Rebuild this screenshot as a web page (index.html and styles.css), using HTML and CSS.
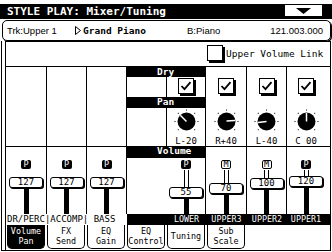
FILE: index.html
```html
<!DOCTYPE html>
<html lang="en">
<head>
    <meta charset="UTF-8">
    <title>Style Play - Mixer/Tuning</title>
    <link rel="stylesheet" href="styles.css">
</head>
<body>
<div class="screen">
    <div class="titlebar">
        <span class="title">STYLE PLAY: Mixer/Tuning</span>
        <span class="menu-btn">
            <svg width="15" height="6" viewBox="0 0 15 6"><polygon points="0,0 15,0 7.5,6" fill="#000"/></svg>
        </span>
    </div>

    <div class="trackbar">
        <span class="trk">Trk:Upper 1</span>
        <svg class="play" width="6" height="9" viewBox="0 0 6 9"><polygon points="0.5,0.5 5.5,4.5 0.5,8.5" fill="none" stroke="#000"/></svg>
        <span class="sound">Grand Piano</span>
        <span class="bank">B:Piano</span>
        <span class="prog">121.003.000</span>
    </div>

    <div class="frame">
        <div class="inner">
            <div class="link-row">
                <span class="check"></span>
                <span class="link-label">Upper Volume Link</span>
            </div>

            <div class="mixer">
                <!-- left tracks: no dry/pan -->
                <div class="col1 top line"></div>
                <div class="col2 top line"></div>
                <div class="col3 top line"></div>

                <!-- section headers -->
                <div class="head row1">Dry</div>
                <div class="head row3">Pan</div>
                <div class="head row5">Volume</div>
                <div class="col4 row2 line"></div>
                <div class="col4 row4 line"></div>
                <div class="col4 row6"></div>

                <!-- row 1 / 3 blanks for upper columns -->
                <div class="col6 row1 line"></div>
                <div class="col7 row1 line"></div>
                <div class="col8 row1"></div>
                <div class="col6 row3 line"></div>
                <div class="col7 row3 line"></div>
                <div class="col8 row3"></div>

                <!-- dry checkboxes -->
                <div class="col5 row2 line box-cell"><span class="check"><svg width="14" height="14" viewBox="0 0 14 14"><path d="M2.5 7 L5.5 10.2 L11.5 3.2" fill="none" stroke="#000" stroke-width="1.8"/></svg></span></div>
                <div class="col6 row2 line box-cell"><span class="check"><svg width="14" height="14" viewBox="0 0 14 14"><path d="M2.5 7 L5.5 10.2 L11.5 3.2" fill="none" stroke="#000" stroke-width="1.8"/></svg></span></div>
                <div class="col7 row2 line box-cell"><span class="check"><svg width="14" height="14" viewBox="0 0 14 14"><path d="M2.5 7 L5.5 10.2 L11.5 3.2" fill="none" stroke="#000" stroke-width="1.8"/></svg></span></div>
                <div class="col8 row2 box-cell last"><span class="check"><svg width="14" height="14" viewBox="0 0 14 14"><path d="M2.5 7 L5.5 10.2 L11.5 3.2" fill="none" stroke="#000" stroke-width="1.8"/></svg></span></div>

                <!-- pan knobs -->
                <div class="col5 row4 line knob-cell">
                    <svg width="25" height="25" viewBox="0 0 25 25">
                        <g fill="#000"><rect x="12" y="0.5" width="1" height="1"/><rect x="20.2" y="3.8" width="1" height="1"/><rect x="23.5" y="12" width="1" height="1"/><rect x="20.2" y="20.2" width="1" height="1"/><rect x="3.8" y="3.8" width="1" height="1"/><rect x="0.5" y="12" width="1" height="1"/><rect x="3.8" y="20.2" width="1" height="1"/></g>
                        <circle cx="12.5" cy="12.5" r="9" fill="#000"/>
                        <line x1="12.5" y1="12.5" x2="6.3" y2="6.3" stroke="#fff" stroke-width="1.5"/>
                    </svg>
                    <span class="pan">L-20</span>
                </div>
                <div class="col6 row4 line knob-cell">
                    <svg width="25" height="25" viewBox="0 0 25 25">
                        <g fill="#000"><rect x="12" y="0.5" width="1" height="1"/><rect x="20.2" y="3.8" width="1" height="1"/><rect x="23.5" y="12" width="1" height="1"/><rect x="20.2" y="20.2" width="1" height="1"/><rect x="3.8" y="3.8" width="1" height="1"/><rect x="0.5" y="12" width="1" height="1"/><rect x="3.8" y="20.2" width="1" height="1"/></g>
                        <circle cx="12.5" cy="12.5" r="9" fill="#000"/>
                        <line x1="12.5" y1="12" x2="21" y2="11.5" stroke="#fff" stroke-width="1.5"/>
                    </svg>
                    <span class="pan">R+40</span>
                </div>
                <div class="col7 row4 line knob-cell">
                    <svg width="25" height="25" viewBox="0 0 25 25">
                        <g fill="#000"><rect x="12" y="0.5" width="1" height="1"/><rect x="20.2" y="3.8" width="1" height="1"/><rect x="23.5" y="12" width="1" height="1"/><rect x="20.2" y="20.2" width="1" height="1"/><rect x="3.8" y="3.8" width="1" height="1"/><rect x="0.5" y="12" width="1" height="1"/><rect x="3.8" y="20.2" width="1" height="1"/></g>
                        <circle cx="12.5" cy="12.5" r="9" fill="#000"/>
                        <line x1="12.5" y1="12.5" x2="4" y2="13.5" stroke="#fff" stroke-width="1.5"/>
                    </svg>
                    <span class="pan">L-40</span>
                </div>
                <div class="col8 row4 knob-cell last">
                    <svg width="25" height="25" viewBox="0 0 25 25">
                        <g fill="#000"><rect x="12" y="0.5" width="1" height="1"/><rect x="20.2" y="3.8" width="1" height="1"/><rect x="23.5" y="12" width="1" height="1"/><rect x="20.2" y="20.2" width="1" height="1"/><rect x="3.8" y="3.8" width="1" height="1"/><rect x="0.5" y="12" width="1" height="1"/><rect x="3.8" y="20.2" width="1" height="1"/></g>
                        <circle cx="12.5" cy="12.5" r="9" fill="#000"/>
                        <line x1="12.5" y1="12.5" x2="12.5" y2="4" stroke="#fff" stroke-width="1.5"/>
                    </svg>
                    <span class="pan">C 00</span>
                </div>

                <!-- row 5 blanks on the right -->
                <div class="col6 row5 line sep"></div>
                <div class="col7 row5 line sep"></div>
                <div class="col8 row5 sep"></div>

                <!-- volume sliders -->
                <div class="col1 vol line sep slot-low">
                    <div class="slider"><span class="badge">P</span><span class="rail none" style="height:7px"></span><span class="value">127</span><span class="stem"></span></div>
                </div>
                <div class="col2 vol line sep slot-low">
                    <div class="slider"><span class="badge">P</span><span class="rail none" style="height:7px"></span><span class="value">127</span><span class="stem"></span></div>
                </div>
                <div class="col3 vol line sep slot-low">
                    <div class="slider"><span class="badge">P</span><span class="rail none" style="height:7px"></span><span class="value">127</span><span class="stem"></span></div>
                </div>
                <div class="col5 row6 line slot">
                    <div class="slider"><span class="badge">P</span><span class="rail" style="height:17px"></span><span class="value">55</span><span class="stem"></span></div>
                </div>
                <div class="col6 row6 line slot">
                    <div class="slider"><span class="badge m">M</span><span class="rail" style="height:13px"></span><span class="value">70</span><span class="stem"></span></div>
                </div>
                <div class="col7 row6 line slot">
                    <div class="slider"><span class="badge m">M</span><span class="rail" style="height:8px"></span><span class="value">100</span><span class="stem"></span></div>
                </div>
                <div class="col8 row6 slot last">
                    <div class="slider"><span class="badge">P</span><span class="rail" style="height:6px"></span><span class="value">120</span><span class="stem"></span></div>
                </div>

                <!-- track names -->
                <div class="names row7">DR/PERC|ACCOMP| BASS</div>
                <div class="col4 row7 tag"></div>
                <div class="col5 row7 tag">LOWER</div>
                <div class="col6 row7 tag">UPPER3</div>
                <div class="col7 row7 tag">UPPER2</div>
                <div class="col8 row7 tag last">UPPER1</div>
            </div>

            <div class="tabs">
                <div class="tab on">Volume<br>Pan</div>
                <div class="tab">FX<br>Send</div>
                <div class="tab">EQ<br>Gain</div>
                <div class="tab">EQ<br>Control</div>
                <div class="tab single">Tuning</div>
                <div class="tab">Sub<br>Scale</div>
            </div>
        </div>
    </div>
</div>
</body>
</html>
```

FILE: styles.css
```css
* { box-sizing: border-box; }
body {
    margin: 0;
    background: #fff;
    color: #000;
    font-family: "DejaVu Sans Mono", monospace;
}
.screen { width: 332px; height: 252px; overflow: hidden; }

/* title */
.titlebar {
    margin-top: 4px;
    height: 15px;
    background: #000;
    display: flex;
    justify-content: space-between;
    padding: 0 9px 0 7px;
}
.title { color: #fff; font-weight: bold; font-size: 11px; line-height: 16px; }
.menu-btn {
    width: 39px;
    height: 13px;
    background: #fff;
    border: 1px solid #000;
    display: flex;
    justify-content: center;
    align-items: center;
}

/* track row */
.trackbar {
    margin: 1px 1px 0 2px;
    height: 21px;
    border: 1px solid #000;
    border-radius: 5px;
    box-shadow: 1px 1px 0 #000;
    display: flex;
    align-items: center;
    padding: 0 7px 0 4px;
    font-family: "Liberation Sans", sans-serif;
    font-size: 9.5px;
}
.trk { width: 68px; }
.play { margin-right: 2px; }
.sound {
    width: 104px;
    font-family: "DejaVu Sans Mono", monospace;
    font-weight: bold;
    font-size: 9.5px;
}
.prog { margin-left: auto; }

/* frame */
.frame {
    margin-left: 1px;
    width: 330px;
    border-left: 1px solid #000;
    border-right: 1px solid #000;
    border-bottom: 1px solid #000;
}
.inner {
    margin-left: 3px;
    border-left: 1px solid #000;
    border-top: 1px solid #000;
}
.link-row {
    height: 24px;
    display: flex;
    align-items: flex-start;
    padding: 3px 0 0 201px;
    gap: 3px;
}
.link-label { font-size: 9.5px; line-height: 17px; }

.check {
    width: 16px;
    height: 16px;
    border: 1px solid #000;
    box-shadow: 2px 2px 0 #000;
    background: #fff;
    display: flex;
    flex-shrink: 0;
}

/* mixer grid */
.mixer {
    display: grid;
    grid-template-columns: 41px 40px 40px 40px 39px 41px 40px 43px;
    grid-template-rows: 10px 20px 11px 38px 12px 56px 11px;
    border-top: 1px solid #000;
}
.col1 { grid-column: 1; }
.col2 { grid-column: 2; }
.col3 { grid-column: 3; }
.col4 { grid-column: 4; }
.col5 { grid-column: 5; }
.col6 { grid-column: 6; }
.col7 { grid-column: 7; }
.col8 { grid-column: 8; }
.row1 { grid-row: 1; }
.row2 { grid-row: 2; }
.row3 { grid-row: 3; }
.row4 { grid-row: 4; }
.row5 { grid-row: 5; }
.row6 { grid-row: 6; }
.row7 { grid-row: 7; }
.top { grid-row: 1 / span 4; }
.vol { grid-row: 5 / span 2; }
.line { border-right: 1px solid #000; }
.sep { border-top: 1px solid #000; }
.last { padding-right: 5px; }

.head {
    grid-column: 4 / span 2;
    background: #000;
    color: #fff;
    font-weight: bold;
    font-size: 9.5px;
    line-height: 10px;
    padding-left: 30px;
}

.box-cell { display: flex; justify-content: center; padding-top: 1px; }

.knob-cell {
    display: flex;
    flex-direction: column;
    align-items: center;
    padding-top: 1px;
}
.pan { font-size: 9px; line-height: 10px; margin-top: 2px; }

/* sliders */
.slot-low { padding-top: 13px; }
.slot { padding-top: 2px; }
.slider {
    height: 100%;
    display: flex;
    flex-direction: column;
    align-items: center;
}
.badge {
    width: 10px;
    height: 9px;
    background: #000;
    color: #fff;
    border-radius: 2px;
    font-size: 8.5px;
    line-height: 9px;
    text-align: center;
    margin-bottom: 1px;
}
.badge.m { background: #fff; color: #000; border: 1px solid #000; line-height: 7px; }
.rail {
    width: 5px;
    border-left: 1px solid #000;
    border-right: 1px solid #000;
}
.rail.none { border: none; }
.value {
    width: 34px;
    height: 11px;
    border: 1px solid #000;
    border-radius: 3px;
    box-shadow: 1px 1px 0 #000;
    font-size: 9px;
    line-height: 9px;
    text-align: center;
    background: #fff;
    flex-shrink: 0;
}
.stem { width: 5px; flex: 1; background: #000; margin-top: 1px; }

/* names */
.names {
    grid-column: 1 / span 3;
    font-size: 9px;
    line-height: 11px;
    padding-left: 1px;
    white-space: pre;
}
.tag {
    background: #000;
    color: #fff;
    font-size: 8.4px;
    line-height: 11px;
    text-align: center;
}

/* tabs */
.tabs {
    height: 25px;
    display: flex;
    gap: 2px;
    padding-left: 1px;
}
.tab {
    width: 38px;
    height: 24px;
    border: 1px solid #000;
    border-top: none;
    border-radius: 0 0 5px 5px;
    font-size: 8.4px;
    line-height: 10px;
    text-align: center;
    padding-top: 1px;
}
.tab.single { padding-top: 6px; }
.tab.on { background: #000; color: #fff; }
```
